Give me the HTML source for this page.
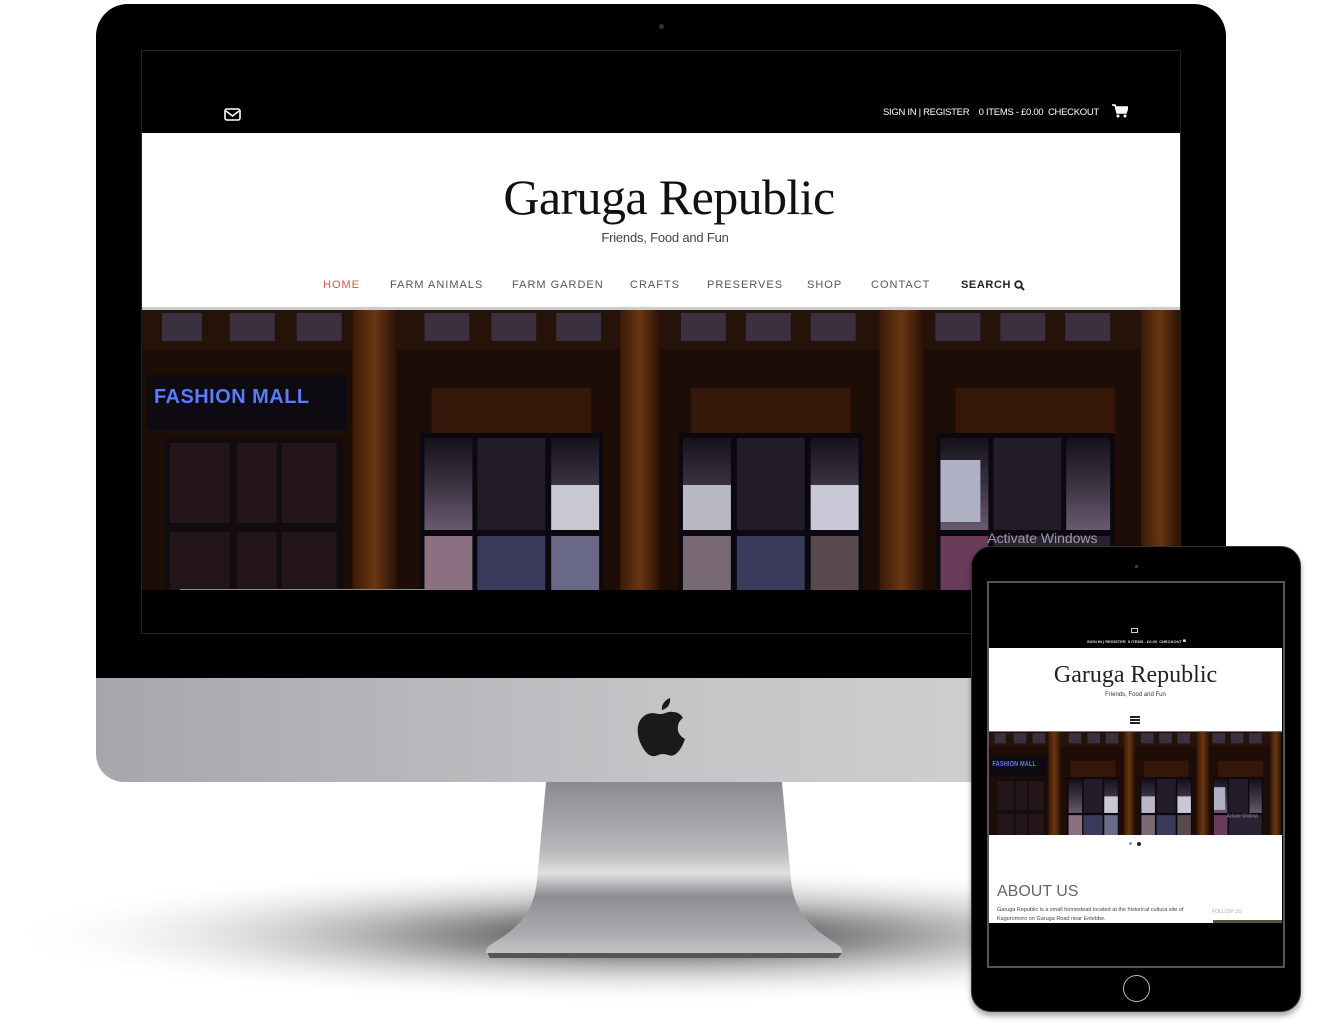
<!DOCTYPE html>
<html><head><meta charset="utf-8"><style>
*{margin:0;padding:0;box-sizing:border-box}
body{width:1340px;height:1029px;background:#fff;position:relative;overflow:hidden;font-family:"Liberation Sans",sans-serif}
.a{position:absolute}
.nav{position:absolute;top:279px;font-size:11px;letter-spacing:1px;color:#555;white-space:nowrap}
</style></head><body>
<svg class="a" style="left:0;top:840px" width="1340" height="189"><defs><radialGradient id="sh" cx="0.5" cy="0.5" r="0.5"><stop offset="0" stop-color="#000" stop-opacity=".85"/><stop offset=".35" stop-color="#333" stop-opacity=".5"/><stop offset="1" stop-color="#fff" stop-opacity="0"/></radialGradient></defs><ellipse cx="660" cy="95" rx="660" ry="70" fill="url(#sh)"/></svg>

<svg class="a" style="left:0;top:0" width="1340" height="1029"><defs><linearGradient id="st" x1="0" y1="0" x2="0" y2="1"><stop offset="0" stop-color="#8a8b8f"/><stop offset=".4" stop-color="#b8b9bb"/><stop offset=".52" stop-color="#e0e0e0"/><stop offset=".65" stop-color="#8d8e92"/><stop offset=".85" stop-color="#a8a9ad"/><stop offset="1" stop-color="#c8c9cb"/></linearGradient></defs>
<path d="M546 782 L782 782 L791 880 C794 915 815 930 838 945 C845 950 843 956 836 957 L492 957 C485 956 484 950 490 945 C515 930 534 915 537 880 Z" fill="url(#st)"/>
<path d="M487 953 L842 953 L838 958 L490 958 Z" fill="#555"/></svg>

<div class="a" style="left:96px;top:4px;width:1130px;height:674px;background:#000;border-radius:32px 32px 0 0"></div>
<div class="a" style="left:96px;top:678px;width:1130px;height:104px;background:linear-gradient(90deg,#a6a7ab,#c3c4c6 50%,#d6d7d9);border-radius:0 0 28px 28px"></div>
<div class="a" style="left:659px;top:24px;width:5px;height:5px;border-radius:50%;background:#333"></div>
<svg class="a" style="left:637px;top:697px" width="48" height="60" viewBox="0 0 48 60"><path fill="#1a1a1a" d="M33 1C34 7 30 12 25 13C24 8 28 3 33 1Z M24 17C28 17 31 14 36 15C40 15 44 17 46 21C40 25 39 34 44 39C46 41 48 42 48 42C46 48 42 56 37 58C33 60 31 57 26 57C21 57 19 60 15 59C10 58 6 52 3 45C-1 35 0 24 7 19C12 15 18 16 21 17C22 17 23 17 24 17Z"/></svg>

<div class="a" style="left:141px;top:50px;width:1040px;height:584px;background:#000;border:1px solid #222"></div>
<svg class="a" style="left:224px;top:108px" width="17" height="13" viewBox="0 0 17 13"><rect x="1" y="1" width="15" height="11" rx="2" fill="none" stroke="#fff" stroke-width="1.6"/><path d="M2 3L8.5 8L15 3" fill="none" stroke="#fff" stroke-width="1.6"/></svg>
<div class="a" style="left:883px;top:107px;color:#fff;font-size:9.5px;white-space:nowrap;letter-spacing:-.3px">SIGN IN | REGISTER &nbsp;&nbsp; 0 ITEMS - £0.00 &nbsp;CHECKOUT</div>
<svg class="a" style="left:1112px;top:104px" width="16" height="14" viewBox="0 0 16 14"><path d="M0 1H3L5 9H14L16 3H4" fill="#fff" stroke="#fff" stroke-width="1.5"/><circle cx="6" cy="12" r="1.5" fill="#fff"/><circle cx="13" cy="12" r="1.5" fill="#fff"/></svg>
<div class="a" style="left:142px;top:133px;width:1038px;height:174px;background:#fff"></div>
<div class="a" style="left:150px;top:168px;width:1038px;text-align:center;font-family:'Liberation Serif',serif;font-size:50px;letter-spacing:-0.6px;color:#111">Garuga Republic</div>
<div class="a" style="left:146px;top:230px;width:1038px;text-align:center;font-size:13px;color:#444;letter-spacing:-.2px">Friends, Food and Fun</div>
<div class="nav" style="left:323px;color:#d9534f">HOME</div>
<div class="nav" style="left:390px">FARM ANIMALS</div>
<div class="nav" style="left:512px">FARM GARDEN</div>
<div class="nav" style="left:630px">CRAFTS</div>
<div class="nav" style="left:707px">PRESERVES</div>
<div class="nav" style="left:807px">SHOP</div>
<div class="nav" style="left:871px">CONTACT</div>
<div class="nav" style="left:961px;color:#222;font-weight:bold;letter-spacing:.6px">SEARCH</div>
<svg class="a" style="left:1014px;top:280px" width="11" height="11" viewBox="0 0 11 11"><circle cx="4.5" cy="4.5" r="3.3" fill="none" stroke="#222" stroke-width="1.8"/><path d="M7 7L10 10" stroke="#222" stroke-width="2"/></svg>
<div class="a" style="left:142px;top:307px;width:1038px;height:3px;background:#ccc"></div>

<svg class="a" style="left:142px;top:310px" width="1038" height="280" viewBox="0 0 1040 280" preserveAspectRatio="none" id="hero">
<defs><linearGradient id="pl" x1="0" x2="1"><stop offset="0" stop-color="#3a1a08"/><stop offset=".5" stop-color="#6a3612"/><stop offset="1" stop-color="#2a1206"/></linearGradient>
<linearGradient id="win" x1="0" y1="0" x2="0" y2="1"><stop offset="0" stop-color="#15121c"/><stop offset=".5" stop-color="#3a3240"/><stop offset="1" stop-color="#6a5a70"/></linearGradient></defs>
<rect width="1040" height="280" fill="#1e0d06"/>
<rect x="0" y="0" width="1040" height="40" fill="#25130a"/>
<g fill="#3a3040"><rect x="20" y="3" width="40" height="28"/><rect x="88" y="3" width="45" height="28"/><rect x="155" y="3" width="45" height="28"/><rect x="283" y="3" width="45" height="28"/><rect x="350" y="3" width="45" height="28"/><rect x="415" y="3" width="45" height="28"/><rect x="540" y="3" width="45" height="28"/><rect x="605" y="3" width="45" height="28"/><rect x="670" y="3" width="45" height="28"/><rect x="795" y="3" width="45" height="28"/><rect x="860" y="3" width="45" height="28"/><rect x="925" y="3" width="45" height="28"/></g>
<rect x="211" y="0" width="44" height="280" fill="url(#pl)"/>
<rect x="479" y="0" width="40" height="280" fill="url(#pl)"/>
<rect x="739" y="0" width="44" height="280" fill="url(#pl)"/>
<rect x="1001" y="0" width="39" height="280" fill="url(#pl)"/>
<rect x="290" y="78" width="160" height="45" fill="#341708"/>
<rect x="550" y="78" width="160" height="45" fill="#341708"/>
<rect x="815" y="78" width="160" height="45" fill="#341708"/>
<rect x="5" y="65" width="200" height="55" fill="#0e0a12"/>
<text x="12" y="93" font-family="Liberation Sans" font-size="20" font-weight="bold" fill="#5a7aff" letter-spacing=".5">FASHION MALL</text>
<rect x="22" y="128" width="180" height="152" fill="#120c10"/>
<g fill="#241519"><rect x="28" y="133" width="60" height="80"/><rect x="95" y="133" width="40" height="80"/><rect x="140" y="133" width="55" height="80"/><rect x="28" y="222" width="60" height="58"/><rect x="95" y="222" width="40" height="58"/><rect x="140" y="222" width="55" height="58"/></g>
<g><rect x="278" y="123" width="184" height="157" fill="#0b0810"/><rect x="283" y="128" width="48" height="92" fill="url(#win)"/><rect x="336" y="128" width="68" height="92" fill="#221c28"/><rect x="410" y="128" width="48" height="92" fill="url(#win)"/><rect x="283" y="226" width="48" height="54" fill="#8a7080"/><rect x="336" y="226" width="68" height="54" fill="#3a3a5a"/><rect x="410" y="226" width="48" height="54" fill="#6a6a88"/><rect x="410" y="175" width="48" height="45" fill="#c8c8d0"/></g>
<g><rect x="538" y="123" width="184" height="157" fill="#0b0810"/><rect x="542" y="128" width="48" height="92" fill="url(#win)"/><rect x="596" y="128" width="68" height="92" fill="#221c28"/><rect x="670" y="128" width="48" height="92" fill="url(#win)"/><rect x="542" y="175" width="48" height="45" fill="#b8b8c4"/><rect x="670" y="175" width="48" height="45" fill="#c8c8d6"/><rect x="542" y="226" width="48" height="54" fill="#7a6a74"/><rect x="596" y="226" width="68" height="54" fill="#3a3a5a"/><rect x="670" y="226" width="48" height="54" fill="#5a4a50"/></g>
<g><rect x="796" y="123" width="178" height="157" fill="#0b0810"/><rect x="800" y="128" width="48" height="92" fill="url(#win)"/><rect x="853" y="128" width="68" height="92" fill="#221c28"/><rect x="926" y="128" width="44" height="92" fill="url(#win)"/><rect x="800" y="150" width="40" height="62" fill="#b0b0c4"/><rect x="800" y="226" width="48" height="54" fill="#6a3a5a"/><rect x="853" y="226" width="117" height="54" fill="#2a2232"/></g>
<text x="847" y="233" font-family="Liberation Sans" font-size="14" fill="#9a9aa8">Activate Windows</text>
</svg>
<div class="a" style="left:142px;top:590px;width:1038px;height:43px;background:#000"></div>
<div class="a" style="left:180px;top:589px;width:250px;height:1px;background:#888"></div>

<div class="a" style="left:971px;top:546px;width:330px;height:466px;background:#000;border-radius:20px;box-shadow:0 4px 6px rgba(0,0,0,.35);border:1px solid #333"></div>
<div class="a" style="left:1135px;top:565px;width:3px;height:3px;border-radius:50%;background:#444"></div>
<div class="a" style="left:987px;top:581px;width:298px;height:387px;border:2px solid #555;background:#000"></div>
<div class="a" style="left:989px;top:648px;width:293px;height:84px;background:#fff"></div>
<div class="a" style="left:1131px;top:628px;width:7px;height:5px;border:1px solid #ccc"></div>
<div class="a" style="left:1087px;top:639px;color:#ddd;font-size:4px;white-space:nowrap;font-weight:bold">SIGN IN | REGISTER &nbsp;0 ITEMS - £0.00 &nbsp;CHECKOUT ▀</div>
<div class="a" style="left:989px;top:662px;width:293px;text-align:center;font-family:'Liberation Serif',serif;font-size:24px;color:#222">Garuga Republic</div>
<div class="a" style="left:989px;top:692px;width:293px;text-align:center;font-size:6px;color:#333">Friends, Food and Fun</div>
<div class="a" style="left:1130px;top:716px;width:10px;height:8px;border-top:2px solid #222;border-bottom:2px solid #222"><div style="margin-top:1px;height:2px;background:#222"></div></div>
<div class="a" style="left:989px;top:731px;width:293px;height:1px;background:#777"></div>
<svg class="a" style="left:989px;top:732px" width="293" height="103" viewBox="0 0 1040 280" preserveAspectRatio="none">
<use href="#hero"/></svg>
<div class="a" style="left:989px;top:835px;width:293px;height:88px;background:#fff"></div>
<div class="a" style="left:1129px;top:842px;width:3px;height:3px;border-radius:50%;background:#999"></div>
<div class="a" style="left:1137px;top:842px;width:4px;height:4px;border-radius:50%;background:#222"></div>
<div class="a" style="left:997px;top:883px;font-size:16px;color:#666">ABOUT US</div>
<div class="a" style="left:997px;top:906px;font-size:5.5px;color:#444;line-height:9px;width:210px">Garuga Republic is a small homestead located at the historical cultura site of Kagoromoro on Garuga Road near Entebbe.</div>
<div class="a" style="left:1212px;top:909px;font-size:5px;color:#aaa">FOLLOW US</div>
<div class="a" style="left:1213px;top:920px;width:69px;height:3px;background:#554"></div>
<div class="a" style="left:1123px;top:975px;width:27px;height:27px;border-radius:50%;border:1.5px solid #bbb"></div>
</body></html>
